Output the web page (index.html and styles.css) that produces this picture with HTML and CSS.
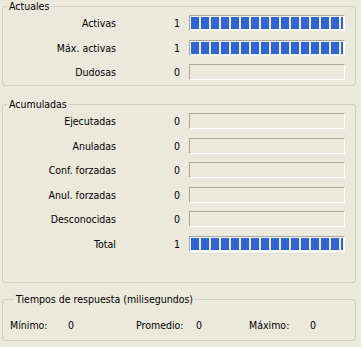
FILE: index.html
```html
<!DOCTYPE html>
<html>
<head>
    <title>Estadísticas</title>
    <link rel="stylesheet" href="styles.css">
</head>

<body>

    <!-- Actuales -->
    <fieldset class="group group-actuales">
        <legend>Actuales</legend>
        <div class="stat-row">
            <span class="stat-label">Activas</span>
            <span class="stat-value">1</span>
            <div class="bar bar-full"></div>
        </div>
        <div class="stat-row">
            <span class="stat-label">Máx. activas</span>
            <span class="stat-value">1</span>
            <div class="bar bar-full"></div>
        </div>
        <div class="stat-row">
            <span class="stat-label">Dudosas</span>
            <span class="stat-value">0</span>
            <div class="bar"></div>
        </div>
    </fieldset>

    <!-- Acumuladas -->
    <fieldset class="group group-acumuladas">
        <legend>Acumuladas</legend>
        <div class="stat-row">
            <span class="stat-label">Ejecutadas</span>
            <span class="stat-value">0</span>
            <div class="bar"></div>
        </div>
        <div class="stat-row">
            <span class="stat-label">Anuladas</span>
            <span class="stat-value">0</span>
            <div class="bar"></div>
        </div>
        <div class="stat-row">
            <span class="stat-label">Conf. forzadas</span>
            <span class="stat-value">0</span>
            <div class="bar"></div>
        </div>
        <div class="stat-row">
            <span class="stat-label">Anul. forzadas</span>
            <span class="stat-value">0</span>
            <div class="bar"></div>
        </div>
        <div class="stat-row">
            <span class="stat-label">Desconocidas</span>
            <span class="stat-value">0</span>
            <div class="bar"></div>
        </div>
        <div class="stat-row">
            <span class="stat-label">Total</span>
            <span class="stat-value">1</span>
            <div class="bar bar-full"></div>
        </div>
    </fieldset>

    <!-- Tiempos -->
    <fieldset class="group group-tiempos">
        <legend>Tiempos de respuesta (milisegundos)</legend>
        <div class="times-row">
            <span>Mínimo:</span>
            <span>0</span>
            <span>Promedio:</span>
            <span>0</span>
            <span>Máximo:</span>
            <span>0</span>
        </div>
    </fieldset>

</body>
</html>
```

FILE: styles.css
```css
body {
    background-color: #ebe9dc;
    font-family: "DejaVu Sans Condensed", "DejaVu Sans", Tahoma, sans-serif;
    font-stretch: condensed;
    font-size: 10.5px;
    color: black;
    margin: 0;
    padding: 0;
}

.group {
    display: flex;
    flex-direction: column;
    gap: 8.5px;
    margin: 0 5px 0 2px;
    padding: 0;
    border: 1px solid #d0cfc0;
    border-radius: 3px;
    min-width: 0;
}

.group legend {
    margin-left: 4px;
    padding: 0 2px;
    line-height: 13px;
}

.group-actuales {
    padding: 2px 0 5px 0;
}

.group-acumuladas {
    margin-top: 12px;
    padding: 2px 0 30px 0;
}

.group-tiempos {
    margin-top: 10px;
    padding: 11px 0 7px 7px;
}

.stat-row {
    display: flex;
    align-items: flex-start;
    height: 16px;
    line-height: 16px;
}

.stat-label {
    width: 113px;
    text-align: right;
}

.stat-value {
    box-sizing: border-box;
    width: 73px;
    padding-left: 58px;
}

.bar {
    box-sizing: border-box;
    width: 156px;
    height: 16px;
    padding: 1px;
    border-top: 1px solid #a9a797;
    border-left: 1px solid #a9a797;
    border-right: 1px solid #ffffff;
    border-bottom: 1px solid #ffffff;
}

.bar-full {
    background-image: repeating-linear-gradient(to right, #3064d0 0, #3064d0 8px, transparent 8px, transparent 10px);
    background-origin: content-box;
    background-clip: content-box;
    box-shadow: inset 0 0 0 1px #eef2fa;
}

.times-row {
    display: grid;
    grid-template-columns: 58px 68px 60px 53px 61px auto;
    height: 16px;
    line-height: 16px;
}
```
